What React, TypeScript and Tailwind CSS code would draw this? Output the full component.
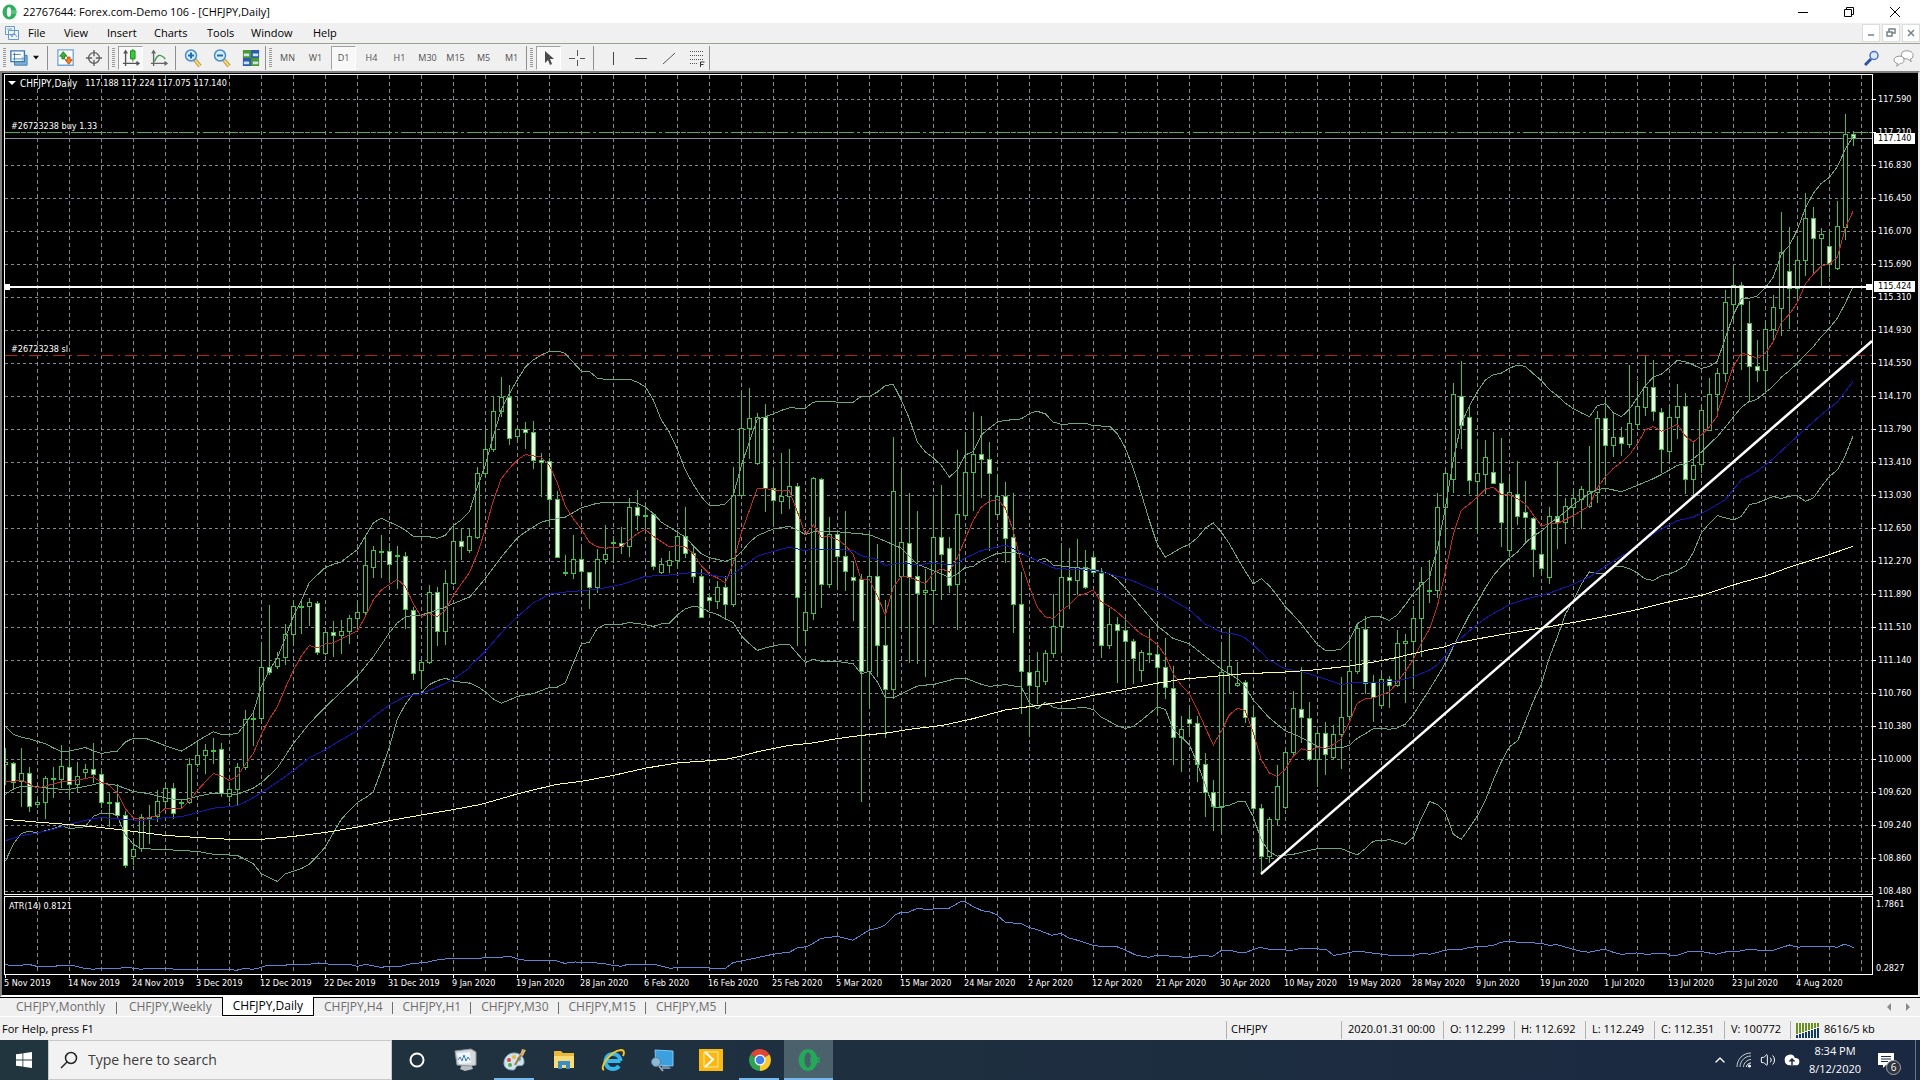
import type { ReactNode } from "react";
import { ChevronUp, Cloud, Volume2 } from "lucide-react";

type Section = { x: number; y: number; sx: number; sy: number };
type Bar = [number, number, number, number, number?];

// Each stretch of history keeps its own origin and resolution.
const A: Section = { x: 0, y: 340, sx: 3, sy: 2.8 };
const B: Section = { x: 460, y: 340, sx: 3, sy: 2.8 };
const C: Section = { x: 920, y: 340, sx: 3, sy: 2.8 };
const D: Section = { x: 1380, y: 320, sx: 2.904, sy: 2.8 };
const E: Section = { x: 1500, y: 60, sx: 3, sy: 3 };
const F: Section = { x: 0, y: 880, sx: 1.6333, sy: 3 };
const G: Section = { x: 960, y: 880, sx: 1.6333, sy: 3 };

// high, body top, body bottom, low, 1 when the bar closed lower
const bars: { start: number; section: Section; rows: Bar[] }[] = [
  {
    start: 0,
    section: A,
    rows: [
      [1145, 1184, 1188, 1245], [1184, 1185, 1238, 1258, 1], [1143, 1213, 1235, 1307], [1196, 1213, 1307, 1321, 1],
      [1285, 1295, 1301, 1310], [1222, 1227, 1295, 1340], [1198, 1228, 1228, 1280], [1134, 1194, 1230, 1252],
      [1153, 1197, 1244, 1278, 1], [1182, 1221, 1245, 1268], [1189, 1202, 1211, 1226], [1131, 1202, 1216, 1240, 1],
      [1205, 1216, 1295, 1308, 1], [1268, 1295, 1295, 1361], [1244, 1295, 1330, 1337, 1], [1320, 1332, 1471, 1477, 1],
      [1405, 1427, 1447, 1468], [1328, 1337, 1425, 1431], [1303, 1337, 1337, 1410], [1262, 1293, 1334, 1348],
      [1242, 1255, 1292, 1310], [1243, 1255, 1325, 1340, 1], [1288, 1295, 1295, 1312], [1172, 1188, 1295, 1298],
      [1120, 1163, 1188, 1195], [1133, 1150, 1163, 1214], [1116, 1148, 1148, 1187], [1131, 1147, 1271, 1278, 1],
      [1240, 1258, 1278, 1291], [1186, 1196, 1258, 1300], [1037, 1062, 1196, 1202], [1046, 1060, 1060, 1134],
      [850, 917, 1059, 1074], [742, 917, 931, 937, 1], [876, 892, 915, 921], [796, 824, 890, 909],
      [733, 746, 824, 853], [731, 746, 746, 823], [723, 735, 747, 798], [733, 737, 874, 881, 1],
      [812, 819, 877, 881], [788, 819, 828, 885, 1], [785, 816, 828, 879], [770, 779, 816, 850],
      [728, 763, 779, 805], [548, 631, 763, 772], [577, 589, 637, 666], [546, 592, 592, 664],
      [570, 591, 628, 672, 1], [577, 604, 604, 696], [595, 605, 754, 807, 1], [750, 757, 934, 951, 1],
      [898, 903, 926, 975], [687, 707, 903, 907], [693, 707, 817, 856, 1], [645, 681, 817, 853],
      [519, 564, 681, 684], [528, 564, 579, 615, 1], [528, 550, 590, 595], [357, 373, 553, 556],
    ],
  },
  {
    start: 60,
    section: B,
    rows: [
      [254, 306, 373, 383], [160, 200, 306, 312], [106, 160, 200, 213], [128, 160, 275, 293, 1],
      [247, 250, 270, 288], [232, 251, 258, 305, 1], [228, 259, 337, 360, 1], [318, 337, 342, 438, 1],
      [333, 341, 446, 522, 1], [424, 446, 608, 610, 1], [602, 650, 650, 660], [548, 614, 653, 668],
      [583, 614, 649, 706, 1], [650, 652, 692, 752, 1], [587, 614, 693, 706], [518, 600, 614, 626],
      [549, 567, 567, 624], [525, 570, 578, 597, 1], [443, 468, 578, 607], [420, 469, 492, 532, 1],
      [465, 490, 490, 529], [486, 489, 634, 642, 1], [611, 629, 651, 654], [592, 617, 631, 652],
      [542, 550, 617, 640], [468, 550, 597, 610, 1], [580, 597, 661, 680, 1], [642, 661, 776, 778, 1],
      [712, 720, 730, 748, 1], [677, 692, 731, 751], [663, 692, 740, 782, 1], [357, 435, 740, 746],
      [144, 247, 436, 437], [135, 219, 247, 331], [205, 217, 346, 348], [181, 216, 415, 480, 1],
      [360, 416, 449, 520, 1], [318, 437, 451, 487], [307, 410, 437, 473], [403, 410, 722, 854, 1],
      [703, 762, 813, 853], [385, 387, 765, 783], [387, 390, 684, 750, 1], [497, 544, 685, 694],
      [540, 544, 606, 693, 1], [480, 606, 648, 702, 1], [623, 665, 673, 784, 1], [656, 670, 927, 1291, 1],
      [542, 662, 928, 1025], [573, 662, 856, 942, 1], [730, 856, 979, 1112, 1], [274, 424, 979, 1005],
      [368, 567, 662, 807], [429, 569, 664, 903, 1], [480, 662, 710, 907, 1], [643, 702, 707, 941],
    ],
  },
  {
    start: 116,
    section: C,
    rows: [
      [434, 552, 702, 793], [408, 553, 600, 727, 1], [552, 583, 688, 707, 1], [308, 488, 685, 811],
      [258, 370, 492, 497], [204, 320, 371, 476], [215, 320, 334, 442, 1], [288, 334, 373, 588, 1],
      [376, 437, 489, 490], [399, 437, 555, 624, 1], [430, 553, 740, 818, 1], [650, 740, 929, 1046, 1],
      [883, 931, 967, 1110, 1], [876, 927, 970, 1019], [868, 877, 957, 965], [712, 802, 877, 888],
      [570, 664, 803, 875], [583, 665, 674, 752, 1], [559, 638, 674, 712], [589, 638, 693, 695, 1],
      [598, 609, 651, 662, 1], [641, 654, 856, 888, 1], [753, 796, 855, 864], [776, 797, 814, 960, 1],
      [772, 813, 844, 967, 1], [838, 844, 891, 962, 1], [870, 875, 926, 956], [811, 877, 877, 902],
      [855, 881, 916, 1051, 1], [836, 916, 972, 1003, 1], [913, 975, 1112, 1189, 1], [1054, 1090, 1113, 1208],
      [1035, 1063, 1074, 1102, 1], [1055, 1073, 1188, 1237, 1], [1158, 1188, 1267, 1333, 1], [1232, 1267, 1306, 1372, 1],
      [851, 931, 1308, 1379], [807, 914, 937, 990], [903, 961, 968, 969], [952, 959, 1056, 1070, 1],
      [1025, 1056, 1311, 1320, 1], [1300, 1311, 1447, 1496, 1], [1337, 1342, 1447, 1463], [1190, 1250, 1342, 1358],
      [1150, 1155, 1309, 1311], [985, 1031, 1155, 1165], [917, 1034, 1056, 1127, 1], [1014, 1059, 1174, 1176, 1],
      [1092, 1101, 1174, 1249], [1072, 1101, 1161, 1217, 1], [1078, 1104, 1169, 1174], [945, 1056, 1105, 1199],
      [841, 927, 1055, 1067], [795, 809, 929, 933], [773, 810, 962, 990, 1], [940, 960, 1001, 1069, 1],
      [937, 950, 1024, 1027], [941, 951, 968, 1030, 1], [812, 851, 968, 971],
    ],
  },
  {
    start: 175,
    section: D,
    rows: [
      [880, 901, 907, 1070], [802, 835, 901, 1033], [693, 735, 835, 943], [673, 758, 758, 790],
      [485, 525, 757, 777], [418, 430, 525, 630], [177, 208, 446, 483], [115, 213, 296, 360, 1],
      [246, 273, 450, 486, 1], [337, 429, 453, 598], [337, 384, 433, 487], [315, 427, 457, 458, 1],
      [333, 457, 567, 633, 1], [438, 483, 645, 662], [396, 488, 551, 573, 1], [451, 539, 553, 620, 1],
      [552, 555, 642, 719, 1], [600, 656, 696, 713, 1], [526, 550, 720, 738], [396, 549, 567, 641, 1],
      [500, 522, 567, 625], [472, 499, 525, 566], [466, 475, 502, 583], [353, 480, 522, 524],
      [255, 275, 482, 510], [223, 275, 351, 461, 1], [262, 328, 351, 383], [300, 328, 346, 378, 1],
      [126, 289, 348, 358], [172, 242, 292, 307], [103, 188, 245, 268], [114, 188, 256, 281, 1],
      [248, 259, 362, 428, 1], [239, 272, 369, 392], [180, 242, 272, 331], [206, 242, 446, 485, 1],
      [346, 407, 446, 493], [238, 253, 405, 427], [165, 208, 310, 310], [137, 149, 208, 260],
    ],
  },
  {
    start: 215,
    section: E,
    rows: [
      [690, 727, 941, 965], [618, 676, 734, 785], [666, 676, 734, 927, 1], [724, 790, 919, 1023, 1],
      [840, 919, 931, 963, 1], [783, 808, 932, 990], [705, 742, 808, 840], [457, 577, 745, 825],
      [501, 634, 685, 804, 1], [528, 601, 685, 715], [399, 475, 601, 645], [441, 475, 535, 639, 1],
      [505, 523, 535, 675], [511, 559, 610, 650, 1], [423, 499, 625, 629], [162, 223, 502, 537],
      [213, 223, 235, 255, 1],
    ],
  },
];

type Trace = { color: string; parts: [Section, string][] };

const traces: Trace[] = [
  {
    color: "#6aa784",
    parts: [
      [A, "16,1082 40,1104 64,1112 88,1117 112,1124 136,1130 160,1142 184,1152 208,1151 232,1146 256,1141 280,1150 304,1158 328,1154 352,1151 376,1126 400,1115 436,1115 472,1127 496,1136 520,1144 544,1151 568,1138 592,1123 616,1110 640,1097 664,1104 712,1103 736,1075 760,1043 784,970 808,925 832,890 856,834 880,775 904,730 928,679 952,658 976,637 1000,628 1024,621 1048,604 1072,587 1096,550 1120,512 1144,499 1168,510 1192,519 1216,532 1240,550 1288,551 1312,555 1336,547 1360,519 1384,504 1408,481 1432,412"],
      [B, "52,412 76,350 100,270 124,195 148,150 172,112 196,76 220,56 244,42 268,32 298,32 316,38 340,63 364,87 388,88 412,107 436,110 510,110 534,119 556,131 580,168 604,224 628,258 652,306 676,364 700,404 724,439 748,463 772,464 796,459 820,435 844,352 868,285 892,222 916,215 940,207 964,197 988,190 1036,191 1060,174 1108,172 1132,174 1180,174 1204,158 1228,158 1252,146 1276,128 1300,124 1324,168 1348,220 1372,285 1396,313 1420,330"],
      [C, "40,330 64,351 88,384 112,364 136,322 160,312 184,266 208,247 232,230 256,225 304,221 328,206 350,199 376,207 400,230 424,236 496,233 520,240 570,242 592,262 616,302 640,360 664,430 688,505 712,572 736,608 760,595 784,582 808,572 832,554 856,527 880,512 904,538 928,570 952,610 976,648 1000,683 1024,668 1048,688 1072,716 1096,747 1120,770 1144,795 1168,824 1192,852 1216,869 1240,870 1264,865 1288,842 1312,795 1336,780 1360,773 1384,776 1408,785"],
      [D, "27,841 50,826 73,798 97,766 120,742 144,722 150,695 167,640 190,525 213,392 236,290 260,240 283,200 306,168 329,153 352,149 376,135 400,126 422,130 445,150 469,170 492,195 515,212 538,233 561,248 585,260 608,271 631,240 655,234 678,260 701,271 724,250 747,218 770,185 794,159 817,152 840,133 863,113 887,117 910,126 933,136 956,130 980,116"],
      [E, "652,903 676,835 700,765 724,717 748,715 772,708 796,683 820,652 844,583 868,557 892,510 916,445 940,400 964,370 988,352 1012,320 1036,268 1060,228"],
    ],
  },
  {
    color: "#6aa784",
    parts: [
      [A, "16,1272 40,1257 64,1250 112,1251 160,1257 208,1258 256,1250 304,1240 352,1247 400,1264 448,1271 496,1282 540,1288 568,1284 592,1278 640,1269 712,1272 760,1255 784,1240 832,1198 880,1130 928,1074 976,1028 1024,985 1072,942 1120,887 1168,820 1192,792 1216,776 1240,771 1264,770 1312,756 1336,748 1360,738 1408,720"],
      [B, "28,721 76,668 124,608 172,554 196,538 244,510 268,504 316,496 364,470 412,457 460,454 508,454 532,457 556,468 580,486 604,510 652,538 676,552 700,576 724,598 748,609 796,620 820,612 844,594 868,567 892,548 940,529 988,522 1012,532 1036,545 1060,537 1132,537 1180,541 1228,545 1276,563 1324,583 1348,605 1372,628 1400,638"],
      [C, "20,638 64,655 88,665 112,655 136,637 160,634 184,618 232,597 280,595 304,598 352,617 376,611 400,630 448,636 496,640 520,642 568,655 592,670 616,695 664,748 712,800 760,836 808,850 856,886 904,922 952,948 976,970 1000,1008 1048,1058 1096,1094 1144,1113 1192,1138 1216,1143 1264,1142 1288,1135 1312,1115 1336,1103 1360,1088 1385,1087"],
      [D, "5,1143 27,1146 50,1142 73,1132 97,1105 120,1070 144,1034 167,998 190,960 213,915 236,870 260,825 283,790 306,750 329,716 352,690 376,667 399,650 422,625 445,604 469,592 492,570 515,555 538,537 561,517 585,502 608,486 631,475 655,471 701,481 747,463 794,444 817,433 863,407 887,403 910,388 933,370 956,348 980,326 1003,300 1026,272 1049,245 1073,228"],
      [E, "748,1026 772,1017 796,998 820,978 844,952 868,932 892,910 916,884 940,860 964,830 988,805 1012,775 1036,730 1058,682"],
    ],
  },
  {
    color: "#6aa784",
    parts: [
      [A, "16,1460 40,1412 64,1382 88,1375 112,1380 160,1368 184,1360 208,1368 256,1363 280,1334 304,1325 340,1327 352,1334 376,1385 400,1412 424,1424 496,1427 592,1432 640,1440 712,1443 760,1466 784,1495 832,1516 856,1495 880,1487 904,1480 928,1468 952,1445 976,1420 1000,1380 1024,1342 1048,1318 1072,1295 1096,1282 1120,1265 1144,1205 1168,1140 1192,1062 1216,1020 1240,991 1264,989 1288,965 1312,954 1336,947 1360,955 1408,961"],
      [B, "28,960 52,970 76,985 100,1005 124,1017 148,1008 172,998 220,990 268,973 292,972 316,960 340,905 364,852 388,846 412,807 436,796 484,796 508,791 556,797 580,802 604,795 628,793 652,770 676,753 700,746 724,749 748,762 772,768 796,780 820,792 844,828 868,850 892,869 916,862 964,852 988,852 1012,878 1036,903 1060,894 1084,900 1132,900 1180,907 1204,935 1228,928 1252,957 1276,1002 1300,1002 1324,991 1372,969"],
      [C, "0,967 40,965 112,947 136,947 184,964 208,970 256,965 304,972 328,1015 352,1033 376,1015 400,1028 424,1033 496,1029 520,1035 544,1056 592,1080 616,1088 640,1082 664,1065 712,1028 736,1034 760,1090 808,1133 832,1185 856,1245 880,1310 928,1303 952,1293 976,1293 1000,1335 1024,1400 1048,1433 1072,1445 1120,1440 1192,1424 1264,1424 1312,1442 1336,1424 1360,1403 1385,1402"],
      [D, "5,1459 27,1455 50,1461 73,1468 97,1448 120,1395 144,1348 167,1357 190,1378 213,1440 236,1454 260,1422 283,1388 306,1345 329,1288 352,1238 376,1195 400,1178 422,1125 445,1068 469,1018 492,945 515,888 538,825 561,785 585,740 608,705 631,711 655,708 678,690 701,690 724,696 747,708 770,725 794,729 817,716 840,711 863,702 887,688 910,650 933,597 956,570 980,548 1026,560 1049,550 1073,517 1096,512 1142,494 1166,500 1189,493 1212,492 1235,508 1259,498 1282,466 1305,438 1328,420 1350,382 1374,324"],
    ],
  },
  {
    color: "#c92a20",
    parts: [
      [A, "16,1236 40,1236 64,1232 88,1243 112,1255 136,1249 160,1243 184,1237 208,1236 256,1228 280,1224 304,1238 328,1247 352,1268 376,1312 400,1338 424,1341 472,1332 496,1311 544,1312 568,1290 592,1262 616,1237 640,1214 664,1221 688,1233 712,1222 736,1188 760,1158 784,1105 808,1062 832,1027 856,975 880,925 904,885 928,855 952,862 976,851 1000,848 1048,826 1072,814 1096,775 1120,728 1144,700 1168,685 1192,670 1216,690 1240,738 1264,775 1288,766 1312,774 1336,757 1360,715 1384,683 1408,652"],
      [B, "28,652 52,600 76,530 100,450 124,388 148,360 172,336 196,321 244,328 268,350 292,400 316,465 340,500 364,530 388,566 412,579 436,583 484,579 508,560 532,542 556,530 580,549 628,579 652,575 676,580 700,598 724,632 748,655 772,666 796,680 820,625 844,540 868,478 892,415 916,416 964,423 988,422 1012,480 1036,545 1060,518 1084,552 1108,551 1132,558 1156,575 1180,600 1204,672 1228,670 1252,715 1276,770 1300,692 1324,662 1348,664 1396,682 1420,654"],
      [C, "40,654 64,640 88,650 112,610 136,556 160,505 184,468 208,452 232,446 256,470 280,535 304,625 328,690 352,748 376,775 400,780 424,757 448,742 472,718 496,710 520,700 544,733 568,746 592,762 616,782 640,805 664,823 688,835 712,852 736,884 760,935 784,967 808,990 832,1035 856,1085 880,1134 904,1095 928,1050 952,1031 976,1038 1000,1100 1024,1175 1048,1212 1072,1222 1096,1202 1120,1165 1144,1145 1168,1150 1192,1141 1216,1143 1240,1133 1264,1117 1288,1070 1312,1017 1336,1005 1360,1002 1408,985"],
      [D, "27,1042 50,1015 73,985 97,950 120,905 144,865 167,800 190,705 213,600 236,533 260,515 283,496 306,474 329,468 352,489 376,490 399,500 422,515 445,545 469,577 492,570 515,570 561,548 608,520 631,470 655,438 678,415 701,399 724,378 747,348 770,308 794,298 817,312 840,303 863,292 887,325 910,342 933,322 956,300 980,268"],
      [E, "652,1060 676,990 700,920 724,880 748,885 772,896 796,880 820,845 844,788 868,763 892,728 916,672 940,643 964,618 988,612 1012,592 1036,505 1060,452"],
    ],
  },
  {
    color: "#1616b8",
    parts: [
      [A, "16,1402 64,1388 112,1380 160,1370 208,1356 256,1345 280,1340 304,1337 376,1343 424,1345 472,1341 496,1337 544,1335 592,1323 640,1311 712,1304 736,1294 784,1268 832,1238 880,1206 928,1170 976,1147 1024,1120 1072,1094 1120,1055 1168,1022 1216,998 1264,990 1312,972 1360,950 1408,918"],
      [B, "28,915 76,872 124,820 172,775 220,736 268,712 316,706 364,702 412,698 484,685 556,662 628,658 700,651 748,657 796,665 820,655 868,622 892,605 940,592 988,580 1036,590 1060,584 1084,588 1132,586 1180,590 1204,604 1252,615 1276,631 1324,624 1372,630 1420,624"],
      [C, "40,624 88,630 112,625 136,610 184,590 256,574 280,584 328,608 400,638 448,642 520,645 568,655 640,675 712,704 760,729 808,755 856,796 904,818 952,825 976,834 1000,854 1048,896 1096,921 1144,928 1192,942 1264,965 1312,958 1385,959"],
      [D, "5,1015 50,1010 73,1006 97,999 144,980 167,965 190,940 213,910 260,870 306,835 376,797 422,782 492,765 561,740 608,720 678,675 747,635 794,598 863,562 910,552 956,530 1003,503 1049,448 1096,423 1142,388 1189,346 1235,305 1282,265 1328,230 1374,172"],
    ],
  },
  {
    color: "#ffff8a",
    parts: [
      [A, "16,1342 112,1350 208,1357 304,1365 400,1376 496,1387 592,1393 688,1398 784,1398 880,1390 976,1379 1072,1364 1168,1346 1264,1330 1360,1315 1440,1301"],
      [B, "76,1297 172,1271 268,1249 292,1244 364,1236 460,1219 556,1199 652,1184 748,1178 796,1174 844,1165 892,1153 988,1135 1060,1128 1132,1116 1204,1107 1276,1101 1348,1090 1440,1080"],
      [C, "64,1080 160,1060 256,1036 424,1014 520,995 616,978 712,961 784,950 880,942 976,934 1072,931 1168,925 1288,913 1360,902"],
      [D, "50,945 144,923 190,915 213,906 283,893 376,877 469,862 561,847 655,830 747,811 840,789 933,771 1049,735 1119,717 1189,692 1282,664 1374,634"],
    ],
  },
];

const atr: [Section, string][] = [
  [F, "8,253 16,256 36,256 45,252 60,259 90,259 100,255 115,255 125,259 138,265 152,268 165,265 195,265 204,261 218,265 230,268 240,265 275,265 295,270 318,268 375,268 386,271 400,265 412,268 425,263 437,256 465,256 475,253 505,253 520,249 540,253 570,253 584,259 597,253 622,262 637,259 655,259 675,250 695,248 710,241 735,235 785,235 792,232 818,232 832,229 848,238 860,241 910,243 922,250 940,246 985,250 1000,256 1015,259 1027,252 1055,255 1067,252 1080,258 1095,265 1107,262 1150,262 1162,265 1185,265 1197,248 1210,243 1225,238 1262,223 1290,216 1303,203 1318,200 1342,175 1368,169 1393,181 1420,150 1437,143 1447,133 1462,105 1472,97 1485,96 1498,85 1512,88 1550,85 1568,66"],
  [G, "0,66 8,65 20,78 36,92 48,95 60,104 74,127 100,131 112,142 125,148 150,166 165,160 178,174 192,181 215,195 232,200 256,200 270,210 288,226 308,232 322,226 335,226 348,230 375,232 400,225 412,230 426,212 440,211 455,217 467,217 490,202 505,208 525,208 535,211 545,210 558,205 598,208 610,226 622,223 648,213 690,223 702,226 742,226 755,219 768,223 792,211 805,208 820,208 832,202 870,197 883,187 897,183 912,187 950,190 965,197 973,193 1010,212 1027,217 1053,207 1067,217 1080,223 1105,219 1120,223 1150,220 1162,226 1172,226 1190,214 1210,214 1235,223 1255,214 1275,213 1290,207 1305,211 1328,211 1355,195 1368,202 1380,199 1420,199 1433,202 1445,192 1460,203"],
];

const prices = [
  "117.590", "117.210", "116.830", "116.450", "116.070", "115.690", "115.310", "114.930", "114.550",
  "114.170", "113.790", "113.410", "113.030", "112.650", "112.270", "111.890", "111.510", "111.140",
  "110.760", "110.380", "110.000", "109.620", "109.240", "108.860",
];

const dates = [
  "5 Nov 2019", "14 Nov 2019", "24 Nov 2019", "3 Dec 2019", "12 Dec 2019", "22 Dec 2019", "31 Dec 2019",
  "9 Jan 2020", "19 Jan 2020", "28 Jan 2020", "6 Feb 2020", "16 Feb 2020", "25 Feb 2020", "5 Mar 2020",
  "15 Mar 2020", "24 Mar 2020", "2 Apr 2020", "12 Apr 2020", "21 Apr 2020", "30 Apr 2020", "10 May 2020",
  "19 May 2020", "28 May 2020", "9 Jun 2020", "19 Jun 2020", "1 Jul 2020", "13 Jul 2020", "23 Jul 2020",
  "4 Aug 2020",
];

const columns = Array.from({ length: 58 }, (_, i) => 37.5 + i * 32);
const rows = Array.from({ length: 25 }, (_, i) => 99.5 + i * 33);

function project(parts: [Section, string][]) {
  return parts
    .flatMap(([s, points]) =>
      points.split(" ").map((p) => {
        const [x, y] = p.split(",").map(Number);
        return `${(s.x + x / s.sx).toFixed(1)},${(s.y + y / s.sy).toFixed(1)}`;
      })
    )
    .join(" ");
}

function Candles() {
  return (
    <g stroke="#3fc43f" strokeWidth="1" shapeRendering="crispEdges">
      {bars.flatMap(({ start, section, rows }) =>
        rows.map(([high, top, bottom, low, down], k) => {
          const x = 5.5 + (start + k) * 8;
          const y = (v: number) => Math.round(section.y + v / section.sy - 0.5) + 0.5;
          return (
            <g key={start + k}>
              <path d={`M${x} ${y(high) - 0.5}V${y(top)}M${x} ${y(bottom)}V${y(low) + 0.5}`} />
              {top === bottom ? (
                <path d={`M${x - 2.5} ${y(top)}h5`} strokeWidth="2" />
              ) : (
                <rect
                  x={x - 2}
                  y={y(top)}
                  width="4"
                  height={Math.max(1, y(bottom) - y(top))}
                  fill={down ? "#eaffe4" : "#000000"}
                />
              )}
            </g>
          );
        })
      )}
    </g>
  );
}

function PriceChart() {
  return (
    <svg viewBox="5 75 1867 819" preserveAspectRatio="none" className="absolute inset-0 h-full w-full">
      <g stroke="#858a92" shapeRendering="crispEdges">
        {columns.map((x) => (
          <path key={x} d={`M${x} 75V894`} strokeDasharray="4 3" />
        ))}
        {rows.map((y) => (
          <path key={y} d={`M5 ${y}H1872`} strokeDasharray="3 3" />
        ))}
      </g>
      <g fill="none" shapeRendering="crispEdges">
        <path d="M5 132.5H1872" stroke="#58a858" strokeDasharray="13 3 3 3" />
        <path d="M5 138.5H1872" stroke="#8a8f98" />
        <path d="M5 355.5H1872" stroke="#b82020" strokeDasharray="12 5 2 5" />
      </g>
      <Candles />
      <g fill="none" shapeRendering="crispEdges">
        {traces.map(({ color, parts }, i) => (
          <polyline key={i} points={project(parts)} stroke={color} />
        ))}
      </g>
      <path d="M1261 874L1872 341" stroke="#fff" strokeWidth="2.5" />
      <path d="M5 287H1872" stroke="#fff" strokeWidth="2" />
      <path d="M5 284h5v6h-5zM1866 284h6v6h-6z" fill="#fff" />
    </svg>
  );
}

function AtrChart() {
  return (
    <svg viewBox="5 897 1867 77" preserveAspectRatio="none" className="absolute inset-0 h-full w-full">
      <g stroke="#858a92" shapeRendering="crispEdges">
        {columns.map((x) => (
          <path key={x} d={`M${x} 897V974`} strokeDasharray="4 3" />
        ))}
      </g>
      <polyline points={project(atr)} fill="none" stroke="#5b86d8" shapeRendering="crispEdges" />
    </svg>
  );
}

function Icon({ children, className = "h-5 w-5", box = 20 }: { children: ReactNode; className?: string; box?: number }) {
  return (
    <svg viewBox={`0 0 ${box} ${box}`} className={className} fill="none" aria-hidden="true">
      {children}
    </svg>
  );
}

function Logo({ className = "h-4 w-4" }: { className?: string }) {
  return (
    <Icon className={className} box={16}>
      <ellipse cx="7.5" cy="8" rx="7" ry="7.5" fill="#2fae60" />
      <ellipse cx="7" cy="8" rx="2.2" ry="4.8" fill="#fff" />
      <path d="M8.5 7h7M8.5 9h7" stroke="#7fd4a0" />
    </Icon>
  );
}

function Magnifier({ sign }: { sign: string }) {
  return (
    <Icon>
      <path d="M12 12l5 6" stroke="#b9963a" strokeWidth="4" />
      <path d="M12 12l5 6" stroke="#f3d77a" strokeWidth="2" />
      <circle cx="8" cy="7.5" r="5.5" fill="#d8ecfa" stroke="#4a8cc8" strokeWidth="1.5" />
      <path d={sign} stroke="#1f6fb8" strokeWidth="2" />
    </Icon>
  );
}

function Handle() {
  return <div className="mx-[3px] h-5 w-[3px] bg-[repeating-linear-gradient(#9a9a9a_0_1px,#f0f0f0_1px_2px)]" />;
}

function Divider() {
  return <div className="h-6 w-px bg-[#8f8f8f]" />;
}

function Tool({ label, active, children }: { label: string; active?: boolean; children: ReactNode }) {
  return (
    <button
      aria-label={label}
      className={
        active
          ? "flex h-6 w-[25px] items-center justify-center border border-[#a0a0a0] border-r-white border-b-white bg-[#f8f8f8]"
          : "flex h-6 w-[25px] items-center justify-center"
      }
    >
      {children}
    </button>
  );
}

function TitleBar() {
  return (
    <header className="flex h-[23px] flex-none items-center bg-white pr-0.5 pl-0.5 text-black">
      <Logo />
      <h1 className="ml-[5px] text-[11px] leading-[14px]">22767644: Forex.com-Demo 106 - [CHFJPY,Daily]</h1>
      <div className="ml-auto flex h-full">
        <button aria-label="Minimize" className="flex w-[46px] items-center justify-center">
          <Icon className="h-3 w-3" box={12}><path d="M1 6.5h10" stroke="#000" /></Icon>
        </button>
        <button aria-label="Restore" className="flex w-[46px] items-center justify-center">
          <Icon className="h-3 w-3" box={12}><path d="M1.5 3.5h7v7h-7zM3.5 3.5v-2h7v7h-2" stroke="#000" /></Icon>
        </button>
        <button aria-label="Close" className="flex w-[46px] items-center justify-center">
          <Icon className="h-3 w-3" box={12}><path d="M1 1l10 10M11 1L1 11" stroke="#000" /></Icon>
        </button>
      </div>
    </header>
  );
}

function MenuBar() {
  return (
    <nav className="flex h-[21px] flex-none items-center border-b border-[#9aa592] pl-1 text-[11px]">
      <Icon className="h-4 w-4" box={16}>
        <path d="M1.5 1.5h9v8h-9zM4.5 5.5h10v9h-10z" fill="#eef5fb" stroke="#6a9ac8" />
        <path d="M6 9l2 3 2-4 3 4M3 4h5" stroke="#6a9ac8" />
      </Icon>
      <button className="ml-2 w-[19px] text-left">File</button>
      <button className="ml-[17px] w-[25px] text-left">View</button>
      <button className="ml-[18px] w-[29px] text-left">Insert</button>
      <button className="ml-[18px] w-[34px] text-left">Charts</button>
      <button className="ml-[19px] w-[26px] text-left">Tools</button>
      <button className="ml-[18px] w-11 text-left">Window</button>
      <button className="ml-[18px] w-[25px] text-left">Help</button>
      <div className="ml-auto flex gap-0.5">
        {[
          ["Minimize chart", "M3 8h6"],
          ["Restore chart", "M2 5h5v4H2zM4 5V2h6v4H7"],
          ["Close chart", "M3 3l6 6M9 3l-6 6"],
        ].map(([label, d]) => (
          <button key={label} aria-label={label} className="flex h-[18px] w-[18px] items-center justify-center border border-[#dcdcdc] bg-white">
            <Icon className="h-3 w-3" box={12}><path d={d} stroke="#75808a" strokeWidth="1.5" /></Icon>
          </button>
        ))}
      </div>
    </nav>
  );
}

const frames = ["MN", "W1", "D1", "H4", "H1", "M30", "M15", "M5", "M1"];

function Toolbar() {
  return (
    <div className="flex h-[27px] flex-none items-center text-[#505050]">
      <Handle />
      <button aria-label="New chart" className="flex w-[38px] items-center gap-1 pl-px">
        <Icon className="h-[18px] w-[18px]">
          <path d="M5 7h14v11H5z" fill="#7db0d8" stroke="#3a78b0" />
          <path d="M1 2h15v12H1z" fill="#fff" stroke="#3a78b0" strokeWidth="1.5" />
          <path d="M3 6h9M3 11h11M5 4v9M13 9l2 2-2 2" stroke="#3a78b0" />
        </Icon>
        <Icon className="h-1.5 w-2" box={8}><path d="M0 1h8L4 6z" fill="#111" /></Icon>
      </button>
      <Divider />
      <div className="ml-1 flex">
        <button aria-label="Quotes" className="flex h-6 w-7 items-center justify-center">
          <Icon className="h-[18px] w-[18px]">
            <path d="M1 1h17v17H1z" fill="#fff" stroke="#6fa8d8" strokeWidth="1.5" />
            <path d="M7 3L3 8h2.5v3h3V8H11z" fill="#3cb43c" stroke="#1d7a1d" />
            <path d="M13 17l4-5h-2.5V9h-3v3H9z" fill="#f08030" stroke="#c04a10" />
          </Icon>
        </button>
        <button aria-label="Target" className="flex h-6 w-7 items-center justify-center">
          <Icon className="h-[18px] w-[18px]"><circle cx="10" cy="10" r="6" stroke="#606060" strokeWidth="1.5" /><path d="M10 1v7M10 12v7M1 10h7M12 10h7" stroke="#606060" strokeWidth="1.5" /></Icon>
        </button>
      </div>
      <Divider />
      <Handle />
      <div className="flex gap-[3px]">
        <Tool label="Candlesticks" active>
          <Icon className="h-[18px] w-[18px]"><path d="M4 3v16M1 16h17M2 5l2-3 2 3M16 14l3 2-3 2" stroke="#555" strokeWidth="1.5" /><path d="M12 0v14" stroke="#188018" /><path d="M9.5 2h5v9h-5z" fill="#35cf35" stroke="#188018" /></Icon>
        </Tool>
        <Tool label="Line chart">
          <Icon className="h-[18px] w-[18px]"><path d="M4 3v16M1 16h17M2 5l2-3 2 3M16 14l3 2-3 2" stroke="#666" strokeWidth="1.5" /><path d="M5 14c3-8 6-9 12-3" stroke="#3a9a4a" strokeWidth="1.5" /></Icon>
        </Tool>
      </div>
      <div className="ml-1"><Divider /></div>
      <div className="ml-1 flex gap-1">
        <Tool label="Zoom in"><Magnifier sign="M5 7.5h6M8 4.5v6" /></Tool>
        <Tool label="Zoom out"><Magnifier sign="M5 7.5h6" /></Tool>
        <Tool label="Tile windows">
          <Icon className="h-[18px] w-[18px]">
            <path d="M1 1h9v9H1zM10 10h9v9h-9z" fill="#4a9a30" /><path d="M10 1h9v9h-9zM1 10h9v9H1z" fill="#2a5cb0" />
            <path d="M2 5h6v3H2zM12 5h6v3h-6zM2 14h6v3H2zM12 14h6v3h-6z" fill="#cfe2ee" />
          </Icon>
        </Tool>
      </div>
      <div className="ml-0.5"><Divider /></div>
      <Handle />
      <div className="flex gap-[3px] text-[9px]">
        {frames.map((f) => (
          <Tool key={f} label={f} active={f === "D1"}>{f}</Tool>
        ))}
      </div>
      <div className="ml-0.5"><Divider /></div>
      <Handle />
      <Tool label="Cursor" active>
        <Icon className="h-4 w-4" box={16}><path d="M4 1v12l3-3 2 5 2-1-2-5h4z" fill="#4a4a4a" /></Icon>
      </Tool>
      <div className="ml-[3px] flex">
        <Tool label="Crosshair"><Icon className="h-4 w-4" box={16}><path d="M8.5 0v6M8.5 10v6M0 8.5h6M11 8.5h5" stroke="#555" /></Icon></Tool>
      </div>
      <div className="ml-1"><Divider /></div>
      <div className="ml-1.5 flex gap-[3px]">
        <Tool label="Vertical line"><Icon className="h-4 w-4" box={16}><path d="M8.5 2v13" stroke="#444" /></Icon></Tool>
        <Tool label="Horizontal line"><Icon className="h-4 w-4" box={16}><path d="M2 8.5h12" stroke="#444" /></Icon></Tool>
        <Tool label="Trend line"><Icon className="h-4 w-4" box={16}><path d="M2 14L14 3" stroke="#555" /></Icon></Tool>
        <Tool label="Fibonacci">
          <Icon className="h-[18px] w-[18px]" box={18}><path d="M2 2.5h14M2 6.5h14M2 10.5h14M2 14.5h8" stroke="#555" strokeDasharray="1 1" /><path d="M12.5 18v-5h4M12.5 15.5h3" stroke="#333" /></Icon>
        </Tool>
      </div>
      <Divider />
      <button aria-label="Search" className="ml-auto mr-3">
        <Icon className="h-4 w-4" box={16}><path d="M1 15l6-6" stroke="#2a52a8" strokeWidth="3" /><circle cx="10" cy="5.5" r="4" fill="#dfeaf8" stroke="#4470c0" strokeWidth="1.5" /></Icon>
      </button>
      <button aria-label="Chat" className="mr-1">
        <Icon className="h-5 w-6" box={22}>
          <path d="M14 3c4 0 7 2 7 5s-2 4-3 4l1 3-4-3c-4 0-7-1-7-4s2-5 6-5z" fill="#fff" stroke="#8a8a8a" />
          <path d="M6 9c3 0 5 1 5 4s-2 4-4 4l-4 3 1-3c-2 0-4-2-4-4s2-4 6-4z" fill="#fff" stroke="#8a8a8a" />
        </Icon>
      </button>
    </div>
  );
}

function PriceAxis() {
  return (
    <div className="relative flex w-[45px] flex-none flex-col text-[9px] leading-[11px] text-white">
      <div className="flex-[9]" />
      {prices.map((p) => (
        <div key={p} className="flex min-h-0 flex-[33] items-center gap-0.5">
          <span className="h-px w-[3px] bg-white" />
          {p}
        </div>
      ))}
      <div className="flex min-h-0 flex-[22] items-end gap-[5px]"><span />108.480</div>
      <div className="flex min-h-0 flex-[14] items-center pl-[3px]">1.7861</div>
      <div className="flex-[51]" />
      <div className="flex min-h-0 flex-[12] items-center pl-[3px]">0.2827</div>
      <div className="flex-[21]" />
      <div className="absolute top-[59px] left-px h-[11px] w-[41px] bg-white pl-1 text-black">117.140</div>
      <div className="absolute top-[207px] left-px h-[11px] w-[41px] bg-white pl-1 text-black">115.424</div>
    </div>
  );
}

function ChartWindow() {
  return (
    <main className="min-h-0 flex-1 border-t-2 border-r-2 border-b-2 border-l-2 border-[#808080] border-r-[#e3e3e3] border-b-white bg-black pt-px pl-0.5 font-['DejaVu_Sans_Condensed','Open_Sans',sans-serif]">
      <div className="flex h-full">
        <div className="flex min-w-0 flex-1 flex-col text-[9px] leading-[11px] text-white">
          <section className="relative min-h-0 flex-[819_1_0px] border border-white">
            <PriceChart />
            <div className="absolute top-0.5 left-[3px] flex h-3 items-center">
              <Icon className="h-2 w-2" box={8}><path d="M0 2h8L4 6z" fill="#fff" /></Icon>
              <span className="ml-1 text-[10px]">CHFJPY,Daily</span>
              <span className="ml-2">117.188 117.224 117.075 117.140</span>
            </div>
            <span className="absolute top-[46px] left-1.5">#26723238 buy 1.33</span>
            <span className="absolute top-[269px] left-1.5">#26723238 sl</span>
          </section>
          <section className="relative mt-px min-h-0 flex-[77_1_0px] border border-white">
            <AtrChart />
            <span className="absolute top-1 left-1">ATR(14) 0.8121</span>
          </section>
          <div className="flex h-5 flex-none">
            {dates.map((d) => (
              <div key={d} className="relative min-w-0 flex-[64] pt-[3px] whitespace-nowrap">
                <span className="absolute top-0 left-px h-[3px] w-px bg-white" />
                {d}
              </div>
            ))}
            <div className="flex-[13]" />
          </div>
        </div>
        <PriceAxis />
      </div>
    </main>
  );
}

const tabs = ["H4", "H1", "M30", "M15", "M5"];

function ChartTabs() {
  return (
    <div className="flex h-5 flex-none items-stretch border-t border-b border-t-black border-b-white pl-1 text-xs text-[#6d6d6d]">
      <button className="relative px-3">
        CHFJPY,Monthly
        <span className="absolute top-1 right-0 h-3 w-px bg-[#6d6d6d]" />
      </button>
      <button className="pr-2.5 pl-3">CHFJPY,Weekly</button>
      <button className="-mt-px border border-t-0 border-black bg-white px-2.5 text-black">CHFJPY,Daily</button>
      {tabs.map((t) => (
        <button key={t} className="relative px-2.5">
          CHFJPY,{t}
          <span className="absolute top-1 right-0 h-3 w-px bg-[#6d6d6d]" />
        </button>
      ))}
      <div className="ml-auto flex items-center gap-[11px] pr-2">
        <button aria-label="Previous tab"><Icon className="h-2 w-2" box={8}><path d="M6 0v8L2 4z" fill="#8a8a8a" /></Icon></button>
        <button aria-label="Next tab"><Icon className="h-2 w-2" box={8}><path d="M2 0v8l4-4z" fill="#8a8a8a" /></Icon></button>
      </div>
    </div>
  );
}

function StatusBar() {
  return (
    <footer className="flex h-[23px] flex-none items-center pt-0.5 text-[11px] text-black">
      <span className="flex-1 pl-0.5">For Help, press F1</span>
      <span className="flex h-[18px] w-[115px] items-center border-l border-[#b0b0b0] pl-1">CHFJPY</span>
      <span className="flex h-[18px] w-[102px] items-center border-l border-[#b0b0b0] pl-1.5">2020.01.31 00:00</span>
      <span className="flex h-[18px] w-[71px] items-center border-l border-[#b0b0b0] pl-1.5">O: 112.299</span>
      <span className="flex h-[18px] w-[71px] items-center border-l border-[#b0b0b0] pl-1.5">H: 112.692</span>
      <span className="flex h-[18px] w-[69px] items-center border-l border-[#b0b0b0] pl-1.5">L: 112.249</span>
      <span className="flex h-[18px] w-[70px] items-center border-l border-[#b0b0b0] pl-1.5">C: 112.351</span>
      <span className="flex h-[18px] w-[66px] items-center border-l border-[#b0b0b0] pl-1.5">V: 100772</span>
      <span className="flex h-[18px] w-[130px] items-center gap-1 border-l border-[#b0b0b0] pl-[5px]">
        <svg viewBox="0 0 24 16" className="h-4 w-6" aria-hidden="true">
          {[0, 1, 2, 3, 4, 5, 6, 7].map((i) => (
            <g key={i}>
              <path d={`M${i * 3} 1h2v${11 - i}h-2z`} fill="#6b9020" />
              <path d={`M${i * 3} ${13 - i}h2V16h-2z`} fill="#123a5c" />
            </g>
          ))}
        </svg>
        8616/5 kb
      </span>
    </footer>
  );
}

const apps: { name: string; state?: string; icon: ReactNode }[] = [
  { name: "Cortana", icon: <circle cx="12" cy="12" r="6.5" stroke="#fff" strokeWidth="2" /> },
  {
    name: "Activity monitor",
    icon: (
      <>
        <path d="M8 17l9-1 2 5-8 2-5-2z" fill="#b8bec2" />
        <path d="M1 3l16-2 5 3v13l-5 1-14-1z" fill="#d4d8da" stroke="#8f979c" />
        <path d="M3 5l13-1 1 11-12 1z" fill="#eef6fc" />
        <path d="M4 12l2-3 2 4 2-6 2 6 2-4 2 3" stroke="#3b78b8" />
      </>
    ),
  },
  {
    name: "Paint",
    state: "open",
    icon: (
      <>
        <path d="M11 5C5 5 1 10 1 15s4 7 9 7c3 0 2-3 4-4s7 1 7-4-4-9-10-9z" fill="#cfe3ee" stroke="#8fb0c0" />
        <circle cx="6" cy="12" r="2" fill="#e04a30" /><circle cx="11" cy="9" r="2" fill="#f0b830" /><circle cx="16" cy="11" r="2" fill="#3a9ad8" /><circle cx="7" cy="17" r="2" fill="#48b048" />
        <path d="M12 17l7-12" stroke="#b07838" strokeWidth="2" /><path d="M17 7l2-6 4 1-3 6z" fill="#d8b070" />
      </>
    ),
  },
  {
    name: "File Explorer",
    icon: (
      <>
        <path d="M2 3h7l2 2h11v15H2z" fill="#e8b93c" />
        <path d="M2 8h20v12H2z" fill="#fbdc74" />
        <path d="M6 13h12v8h-4v-4h-4v4H6z" fill="#3a8ec8" />
      </>
    ),
  },
  {
    name: "Internet Explorer",
    icon: (
      <>
        <path d="M5 13h14.5M19.5 13A7.5 7.5 0 1 0 18 18" stroke="#35b5ee" strokeWidth="4" />
        <path d="M3 22C-2 20 9 3 20 2c4 0 3 4 2 6" stroke="#f4c428" strokeWidth="2" />
      </>
    ),
  },
  {
    name: "Remote viewer",
    icon: (
      <>
        <path d="M5 2l18 1v15l-17-1z" fill="#3aa0e0" stroke="#82c4ee" />
        <path d="M12 18h7l2 3h-9z" fill="#6a8ca4" />
        <circle cx="6" cy="14" r="4.5" fill="#8fb8d8" stroke="#5a7c98" />
        <path d="M9 18l4 5" stroke="#a0a8b0" strokeWidth="2" />
      </>
    ),
  },
  {
    name: "Mail",
    icon: (
      <>
        <path d="M0 1h24v22H0z" fill="#fbb80f" />
        <path d="M5 4h14v15H5z" stroke="#ffe9b0" />
        <path d="M6 4l8 7.5L6 19" stroke="#fff" strokeWidth="2" />
      </>
    ),
  },
  {
    name: "Chrome",
    state: "open",
    icon: (
      <>
        <path d="M12 12L2.5 6.5A11 11 0 0 1 21.5 6.5z" fill="#e04638" />
        <path d="M12 12L2.5 6.5A11 11 0 0 0 12 23z" fill="#2fa152" />
        <path d="M12 12V23A11 11 0 0 0 21.5 6.5z" fill="#fbc82e" />
        <circle cx="12" cy="12" r="5.5" fill="#fff" /><circle cx="12" cy="12" r="4.3" fill="#3f80ea" />
      </>
    ),
  },
  {
    name: "Forex.com",
    state: "active",
    icon: (
      <>
        <ellipse cx="11" cy="12" rx="9.5" ry="11" fill="#24a85a" />
        <ellipse cx="11" cy="12" rx="3.5" ry="7.5" fill="#465f68" />
        <path d="M13 10.5h10M13 13.5h10" stroke="#24a85a" strokeWidth="2" />
      </>
    ),
  },
];

function Taskbar() {
  return (
    <div className="flex h-10 flex-none items-stretch bg-linear-to-r from-[#21353e] to-[#1b2841] text-white">
      <button aria-label="Start" className="flex w-12 items-center justify-center">
        <Icon className="h-4 w-4" box={16}><path d="M0 2.3l6.5-.9v6.2H0zM7.3 1.3L16 0v7.6H7.3zM0 8.4h6.5v6.2L0 13.7zM7.3 8.4H16V16l-8.7-1.3z" fill="#fff" /></Icon>
      </button>
      <label className="flex w-[344px] items-center border border-[#c8c8c8] bg-[#f2f2f2] pl-[11px] text-[#333]">
        <Icon className="h-[18px] w-[18px]" box={18}><circle cx="11" cy="7" r="5.5" stroke="#222" strokeWidth="1.5" /><path d="M7 11l-6 6" stroke="#222" strokeWidth="1.5" /></Icon>
        <input
          aria-label="Search"
          placeholder="Type here to search"
          className="ml-[10px] min-w-0 flex-1 bg-transparent text-sm placeholder:text-[#3c3c3c] outline-none"
        />
      </label>
      <div className="flex">
        {apps.map(({ name, state, icon }) => (
          <button
            key={name}
            aria-label={name}
            className={
              state === "active"
                ? "relative flex w-[49px] items-center justify-center bg-[#4b616b]"
                : "relative flex w-[49px] items-center justify-center"
            }
          >
            <Icon className="h-6 w-6" box={24}>{icon}</Icon>
            {state === "open" && <span className="absolute bottom-0 left-1 h-0.5 w-10 bg-[#76b9ed]" />}
            {state === "active" && <span className="absolute bottom-0 left-0 h-0.5 w-full bg-[#76b9ed]" />}
          </button>
        ))}
      </div>
      <div className="ml-auto flex items-center">
        <button aria-label="Show hidden icons" className="flex w-6 justify-center"><ChevronUp className="h-4 w-4" /></button>
        <button aria-label="Network" className="flex w-6 justify-center">
          <Icon className="h-4 w-4" box={16}>
            <path d="M1 15C1 7 7 1 15 1M4 15C4 9 9 4 15 4M7.5 15c0-4 4-7.5 7.5-7.5" stroke="#c8d0d4" /><path d="M10.5 15c0-2 2-4 4.500-4" stroke="#fff" /><circle cx="13.5" cy="14" r="1.5" fill="#fff" />
          </Icon>
        </button>
        <button aria-label="Volume" className="flex w-6 justify-center"><Volume2 className="h-4 w-4" strokeWidth={1.5} /></button>
        <button aria-label="Cloud sync" className="relative flex w-6 justify-center">
          <Cloud className="h-4 w-4 fill-white" />
          <svg viewBox="0 0 8 8" className="absolute top-[5px] left-2 h-2 w-2"><path d="M4 8V3M1.5 4.5L4 2l2.5 2.5" stroke="#1b2841" strokeWidth="1.5" fill="none" /></svg>
        </button>
        <div className="flex w-[62px] flex-col text-center text-[11px] leading-[18px]">
          <span>8:34 PM</span>
          <span>8/12/2020</span>
        </div>
        <button aria-label="Notifications" className="relative ml-3 h-10 w-[42px]">
          <Icon className="h-4 w-4" box={16}>
            <path d="M0 1h16v12H8l-3 3v-3H0z" fill="#fff" /><path d="M3 4.5h10M3 7h10M3 9.5h7" stroke="#1b2841" />
          </Icon>
          <span className="absolute top-5 left-2 h-[15px] w-[15px] rounded-full border border-[#a0a8b0] bg-[#30343c] text-[10px] leading-[13px]">6</span>
          <span className="absolute top-0 right-1 h-full w-px bg-[#6a7484]" />
        </button>
      </div>
    </div>
  );
}

export default function App() {
  return (
    <div className="flex h-screen flex-col overflow-hidden bg-[#f0f0f0] font-['Open_Sans','Noto_Sans',sans-serif] text-black">
      <TitleBar />
      <MenuBar />
      <Toolbar />
      <ChartWindow />
      <ChartTabs />
      <StatusBar />
      <Taskbar />
    </div>
  );
}
